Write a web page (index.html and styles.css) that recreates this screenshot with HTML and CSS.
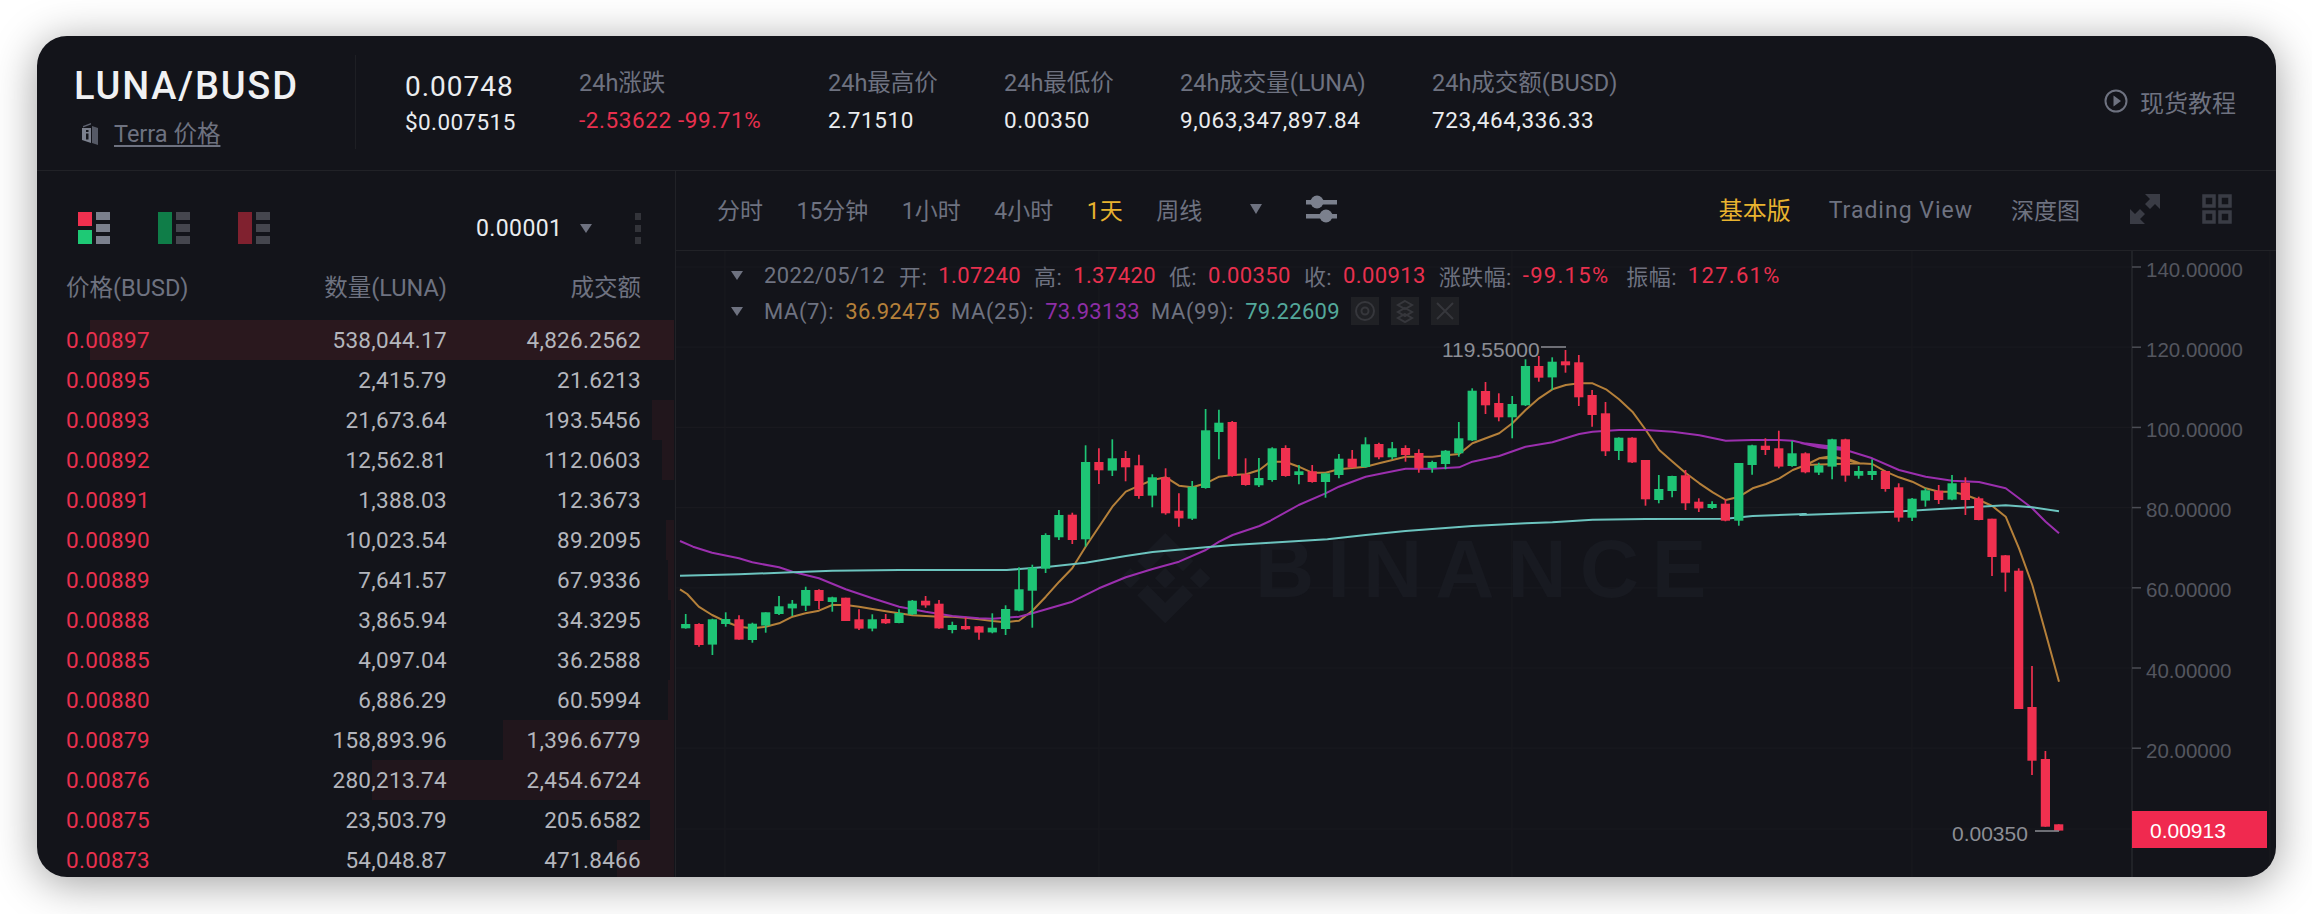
FILE: index.html
```html
<!DOCTYPE html>
<html lang="zh-CN">
<head>
<meta charset="utf-8">
<title>LUNA/BUSD</title>
<link rel="stylesheet" href="styles.css">
</head>
<body>
<main class="card">
  <header class="ticker">
    <div class="symbol">
      <div class="pair">LUNA/BUSD</div>
      <a class="coin">
        <svg class="book" viewBox="0 0 16 22"><path d="M1 3 9 0v1.500L1 4.500z" fill="#5f6370"/><path d="M0 5h9v15l-9-3z" fill="#7b808d"/><path d="M10 3l6 2v17l-6-2z" fill="#555965"/><rect x="4" y="7" width="2.500" height="2" fill="#14151a"/><rect x="4" y="10.500" width="2.500" height="6" fill="#14151a"/></svg>
        <span class="coin-name">Terra 价格</span>
      </a>
    </div>
    <div class="last">
      <div class="last-price">0.00748</div>
      <div class="last-usd">$0.007515</div>
    </div>
    <div class="stat"><div class="stat-k">24h涨跌</div><div class="stat-v red">-2.53622 -99.71%</div></div>
    <div class="stat"><div class="stat-k">24h最高价</div><div class="stat-v">2.71510</div></div>
    <div class="stat"><div class="stat-k">24h最低价</div><div class="stat-v">0.00350</div></div>
    <div class="stat"><div class="stat-k">24h成交量(LUNA)</div><div class="stat-v">9,063,347,897.84</div></div>
    <div class="stat"><div class="stat-k">24h成交额(BUSD)</div><div class="stat-v">723,464,336.33</div></div>
    <a class="tutorial">
      <svg class="play" viewBox="0 0 24 24"><circle cx="12" cy="12" r="10.500" fill="none" stroke="#6e7280" stroke-width="2"/><path d="M9.500 6.500 17 12l-7.500 5.500z" fill="#6e7280"/></svg>
      <span>现货教程</span>
    </a>
  </header>

  <div class="body">
    <section class="book-panel">
      <div class="book-tools">
        <svg class="layout" viewBox="0 0 32 32"><rect width="14" height="14" fill="#f0304f"/><rect y="18" width="14" height="14" fill="#1ec975"/><rect x="18" width="14" height="8" fill="#7b808d"/><rect x="18" y="12" width="14" height="8" fill="#7b808d"/><rect x="18" y="24" width="14" height="8" fill="#7b808d"/></svg>
        <svg class="layout" viewBox="0 0 32 32"><rect width="14" height="32" fill="#0f7d48"/><rect x="18" width="14" height="8" fill="#45464e"/><rect x="18" y="12" width="14" height="8" fill="#45464e"/><rect x="18" y="24" width="14" height="8" fill="#45464e"/></svg>
        <svg class="layout" viewBox="0 0 32 32"><rect width="14" height="32" fill="#80212f"/><rect x="18" width="14" height="8" fill="#45464e"/><rect x="18" y="12" width="14" height="8" fill="#45464e"/><rect x="18" y="24" width="14" height="8" fill="#45464e"/></svg>
        <span class="tick-size">0.00001</span>
        <i class="caret caret-big"></i>
        <span class="kebab"><i></i><i></i><i></i></span>
      </div>
      <div class="book-head"><span>价格(BUSD)</span><span>数量(LUNA)</span><span>成交额</span></div>
      <div class="rows">
        <div class="row"><i class="depth depth-strong" style="width:584px"></i><span class="red">0.00897</span><span>538,044.17</span><span>4,826.2562</span></div>
        <div class="row"><span class="red">0.00895</span><span>2,415.79</span><span>21.6213</span></div>
        <div class="row"><i class="depth" style="width:22px"></i><span class="red">0.00893</span><span>21,673.64</span><span>193.5456</span></div>
        <div class="row"><i class="depth" style="width:12px"></i><span class="red">0.00892</span><span>12,562.81</span><span>112.0603</span></div>
        <div class="row"><span class="red">0.00891</span><span>1,388.03</span><span>12.3673</span></div>
        <div class="row"><i class="depth" style="width:8px"></i><span class="red">0.00890</span><span>10,023.54</span><span>89.2095</span></div>
        <div class="row"><i class="depth" style="width:6px"></i><span class="red">0.00889</span><span>7,641.57</span><span>67.9336</span></div>
        <div class="row"><i class="depth" style="width:3px"></i><span class="red">0.00888</span><span>3,865.94</span><span>34.3295</span></div>
        <div class="row"><i class="depth" style="width:4px"></i><span class="red">0.00885</span><span>4,097.04</span><span>36.2588</span></div>
        <div class="row"><i class="depth" style="width:6px"></i><span class="red">0.00880</span><span>6,886.29</span><span>60.5994</span></div>
        <div class="row"><i class="depth" style="width:171px"></i><span class="red">0.00879</span><span>158,893.96</span><span>1,396.6779</span></div>
        <div class="row"><i class="depth" style="width:302px"></i><span class="red">0.00876</span><span>280,213.74</span><span>2,454.6724</span></div>
        <div class="row"><i class="depth" style="width:24px"></i><span class="red">0.00875</span><span>23,503.79</span><span>205.6582</span></div>
        <div class="row"><i class="depth" style="width:57px"></i><span class="red">0.00873</span><span>54,048.87</span><span>471.8466</span></div>
      </div>
    </section>

    <section class="chart-panel">
      <nav class="tools">
        <div class="tabs">
          <span>分时</span><span>15分钟</span><span>1小时</span><span>4小时</span><span class="on">1天</span><span>周线</span>
          <i class="caret more"></i>
          <svg class="sliders" viewBox="0 0 31 28"><rect y="5" width="31" height="4.500" fill="#7b808d"/><rect y="19" width="31" height="4.500" fill="#7b808d"/><circle cx="11" cy="7" r="6.500" fill="#7b808d"/><circle cx="20" cy="21" r="6.500" fill="#7b808d"/></svg>
        </div>
        <div class="views">
          <span class="on view-basic">基本版</span><span class="latin">Trading View</span><span>深度图</span>
          <svg class="expand" viewBox="0 0 30 30"><path d="M30 0v15l-5-5-5 5-5-5 5-5-5-5zM0 30V15l5 5 5-5 5 5-5 5 5 5z" fill="#3a3c45"/></svg>
          <svg class="panes" viewBox="0 0 30 30"><g fill="none" stroke="#3a3c45" stroke-width="3.500"><rect x="2" y="2" width="10" height="10"/><rect x="18" y="2" width="10" height="10"/><rect x="2" y="18" width="10" height="10"/><rect x="18" y="18" width="10" height="10"/></g></svg>
        </div>
      </nav>
      <div class="canvas">
        <svg id="chart" class="plot" viewBox="676 251 1600 626" xmlns="http://www.w3.org/2000/svg"></svg>
        <div class="legend">
          <div class="legend-line">
            <i class="caret small"></i>
            <span class="k date">2022/05/12</span>
            <span class="k">开:</span><span class="v red">1.07240</span>
            <span class="k">高:</span><span class="v red">1.37420</span>
            <span class="k">低:</span><span class="v red">0.00350</span>
            <span class="k">收:</span><span class="v red">0.00913</span>
            <span class="k">涨跌幅:</span><span class="v pct red">-99.15%</span>
            <span class="k">振幅:</span><span class="v pct red">127.61%</span>
          </div>
          <div class="legend-line">
            <i class="caret small"></i>
            <span class="k ma-k">MA(7):</span><span class="v ma7">36.92475</span>
            <span class="k ma-k">MA(25):</span><span class="v ma25">73.93133</span>
            <span class="k ma-k">MA(99):</span><span class="v ma99">79.22609</span>
            <span class="btns">
              <b class="btn"><svg viewBox="0 0 28 28"><circle cx="14" cy="14" r="9" fill="none" stroke="#36373c" stroke-width="2"/><circle cx="14" cy="14" r="3.500" fill="none" stroke="#36373c" stroke-width="2"/></svg></b>
              <b class="btn"><svg viewBox="0 0 28 28"><g fill="none" stroke="#36373c" stroke-width="2"><path d="M14 4l7 4-7 4-7-4z"/><path d="M14 11l7 4-7 4-7-4z"/><path d="M14 17l7 4-7 4-7-4z"/></g></svg></b>
              <b class="btn"><svg viewBox="0 0 28 28"><path d="M6 6l16 16M22 6 6 22" stroke="#36373c" stroke-width="2"/></svg></b>
            </span>
          </div>
        </div>
      </div>
    </section>
  </div>
</main>
<script src="chart.js"></script>
</body>
</html>
```
FILE: styles.css
```css
* { box-sizing: border-box; }
html, body { margin: 0; height: 100%; background: #fff; overflow: hidden; }
body {
  padding: 36px 36px 37px 37px;
  font-family: Roboto, "Noto Sans CJK SC", sans-serif;
  color: #eaecef;
}
.red { color: #e8304e; }
.card {
  height: 841px;
  display: flex;
  flex-direction: column;
  background: #13141a;
  border-radius: 30px;
  overflow: hidden;
  box-shadow: 0 6px 44px rgba(0, 0, 0, .38);
}

/* ticker */
.ticker {
  flex: none;
  height: 135px;
  display: grid;
  grid-template-columns: 319px 223px 249px 176px 176px 252px 1fr auto;
  border-bottom: 1px solid #212227;
}
.symbol {
  margin: 19px 0 21px;
  padding: 9px 0 0 37px;
  border-right: 1px solid #1e1f24;
}
.pair { font-size: 38px; font-weight: 500; line-height: 44px; letter-spacing: 1.800px; color: #f0f1f3; }
.coin { display: flex; align-items: center; gap: 16px; margin: 12px 0 0 8px; }
.book { width: 16px; height: 22px; }
.coin-name { font-size: 23.500px; line-height: 28px; color: #6e7280; text-decoration: underline; text-underline-offset: 3px; }
.last { padding: 34px 0 0 49px; }
.last-price { font-size: 28px; line-height: 34px; letter-spacing: 1px; }
.last-usd { font-size: 22.500px; line-height: 28px; margin-top: 4px; letter-spacing: .4px; }
.stat { padding-top: 32px; }
.stat-k { font-size: 23.500px; line-height: 30px; color: #6e7280; white-space: nowrap; }
.stat-v { font-size: 22.500px; line-height: 28px; margin-top: 8px; white-space: nowrap; letter-spacing: .6px; }
.tutorial { display: flex; align-items: center; gap: 12px; padding: 0 40px 4px 0; font-size: 24px; color: #6e7280; }
.play { width: 24px; height: 24px; }

/* layout */
.body { flex: 1; min-height: 0; display: flex; }
.book-panel { flex: none; width: 639px; border-right: 1px solid #212227; overflow: hidden; }
.book-tools { display: flex; align-items: center; height: 32px; margin: 41px 0 27px 41px; }
.layout { width: 32px; height: 32px; margin-right: 48px; }
.tick-size { margin-left: 158px; font-size: 23px; letter-spacing: .4px; }
.caret { display: block; width: 0; height: 0; border-style: solid; border-color: #6e7280 transparent transparent; }
.caret-big { margin-left: 18px; border-width: 9px 6px 0; }
.kebab { display: grid; gap: 5px; margin-left: 43px; }
.kebab i { display: block; width: 6px; height: 7px; background: #33343a; }
.book-head {
  display: grid;
  grid-template-columns: 151px 230px 194px;
  height: 34px;
  margin-bottom: 15px;
  padding-left: 29px;
  font-size: 23.500px;
  line-height: 34px;
  color: #6e7280;
}
.book-head span + span, .row span + span { text-align: right; }
.row {
  position: relative;
  display: grid;
  grid-template-columns: 151px 230px 194px;
  height: 40px;
  padding-left: 29px;
  font-size: 22.500px;
  line-height: 40px;
  letter-spacing: .3px;
  color: #b4b6bd;
}
.row span { position: relative; }
.depth { position: absolute; top: 0; right: 1px; bottom: 0; background: #21161c; }
.depth-strong { background: #2a181e; }

/* chart */
.chart-panel { flex: 1; min-width: 0; display: flex; flex-direction: column; }
.tools {
  flex: none;
  height: 80px;
  display: flex;
  align-items: center;
  justify-content: space-between;
  padding: 0 44px 4px 41px;
  border-bottom: 1px solid #212227;
  font-size: 23px;
  color: #6e7280;
}
.tabs, .views { display: flex; align-items: center; }
.tabs { gap: 33.500px; }
.views { gap: 38px; }
.on { color: #e8b32f; }
.view-basic { font-size: 24px; }
.latin { letter-spacing: 1px; position: relative; top: 2px; }
.more { margin-left: 14px; border-width: 10px 6px 0; }
.sliders { width: 31px; height: 28px; margin-left: 11px; }
.expand, .panes { width: 30px; height: 30px; }
.expand { margin-left: 12px; }
.panes { margin-left: 4px; }
.canvas { position: relative; flex: 1; min-height: 0; }
.plot { position: absolute; inset: 0; width: 100%; height: 100%; display: block; }
.legend { position: absolute; top: 6px; left: 55px; font-size: 22px; color: #6e7280; }
.legend-line { display: flex; align-items: center; height: 36px; white-space: nowrap; gap: 11px; }
.small { margin-right: 10px; border-width: 9px 6px 0; }
.date { margin-right: 3px; letter-spacing: .7px; }
.k { letter-spacing: .4px; }
.ma-k { letter-spacing: .6px; }
.v { margin-right: 2px; letter-spacing: .4px; }
.pct { letter-spacing: 1.300px; margin-right: 6px; }
.ma7, .ma25, .ma99 { margin-right: 0; letter-spacing: .3px; }
.ma7 { color: #b5803a; }
.ma25 { color: #8e2ea6; }
.ma99 { color: #53a89a; }
.btns { display: flex; gap: 12px; }
.btn { display: block; width: 28px; height: 28px; background: #202125; }
.btn svg { display: block; width: 28px; height: 28px; }

/* chart svg */
.grid { stroke: #19191f; stroke-width: 1.200; }
.axis { stroke: #26272c; stroke-width: 1.500; }
.axis-tick { stroke: #4b4d55; stroke-width: 1.500; }
.axis-label { font: 20.500px "Liberation Sans", sans-serif; fill: #54565f; dominant-baseline: central; }
.extreme { font: 21px "Liberation Sans", sans-serif; fill: #8c8e95; dominant-baseline: central; }
.extreme-line { stroke: #8c8e95; stroke-width: 1.500; }
.ma { fill: none; stroke-width: 2; stroke-linejoin: round; }
.ma-7 { stroke: #b5803a; }
.ma-25 { stroke: #9b2fae; }
.ma-99 { stroke: #6cc4bf; }
.g { fill: #1ec475; stroke: #1ec475; }
.r { fill: #f0304f; stroke: #f0304f; }
.wick { stroke-width: 1.700; }
.body-rect { stroke: none; }
.tag { fill: #f0294f; }
.tag-text { font: 21px "Liberation Sans", sans-serif; fill: #fff; dominant-baseline: central; }
.mark { font: bold 82px "Liberation Sans", sans-serif; fill: #181a21; letter-spacing: 13px; }
.mark-logo { fill: #181a21; }
```
FILE: chart.js
```js
// Candles: index offset by segment; values [color, wickTop, bodyTop, bodyBottom, wickBottom]
var segs = [
  { y: 340, start: 0, d: "g 822 852 865 866,r 850 852 915 920,g 836 838 914 945,g 817 837 852 860,r 826 838 899 899,g 848 851 900 908,g 817 817 857 878,g 768 799 822 825,g 780 791 805 828,g 740 750 797 813,r 748 750 783 808,g 770 772 786 815,r 773 773 843 843,r 808 838 866 870,g 823 838 866 874,r 822 837 850 852,g 808 819 849 850,g 780 782 823 825,r 768 782 796 803,r 780 791 865 866,g 845 855 870 880,r 832 858 868 870,r 858 859 878 899,g 820 863 877 880,g 796 807 867 885,g 682 748 812 814,g 674 683 752 863,g 580 585 686 699,g 510 525 592 600,r 518 524 600 612,g 316 366 598 620,r 325 366 391 432,g 298 355 392 408,r 333 354 382 424,r 344 376 468 476,g 403 412 467 502,r 385 412 520 524,r 460 512 535 560,g 423 440 536 540,g 207 271 444 446,g 209 248 276 358,r 243 246 408 410,r 355 403 435 437,g 354 414 436 441" },
  { y: 330, start: 44, d: "g 352 355 450 455,r 346 354 438 440,g 405 424 435 463,r 405 424 456 458,g 428 430 456 503,g 372 386 435 445,r 360 386 412 414,g 322 343 411 413,r 338 342 382 388,g 336 355 382 388,r 346 354 375 395,r 358 369 415 428,g 392 396 414 428,g 360 362 402 418,g 276 325 370 380,g 175 182 331 333,r 156 183 226 252,r 190 219 262 274,g 198 222 262 325,g 88 108 226 228,r 78 108 143 155,g 82 95 142 180,r 60 94 106 128,r 75 97 202 228,r 180 195 255 290,r 216 250 364 378,g 322 323 363 390,r 322 323 397 399,r 390 390 508 527,g 435 477 510 520,g 437 438 483 502,r 420 436 520 540,r 505 515 535 546,g 514 522 534 537,r 508 521 572 574,g 399 399 572 587,g 344 346 405 434,r 325 347 360 375,r 302 355 410 415,g 333 370 408 410" },
  { y: 420, start: 84, d: "r 97 100 157 160,g 128 136 158 165,g 56 58 140 178,r 56 58 167 185,g 138 153 167 176,g 118 153 165 180,r 152 153 207 215,r 190 202 293 305,g 234 236 293 303,g 205 211 242 260,r 195 212 240 252,g 165 190 239 241,r 172 188 240 285,r 230 235 300 301,r 296 296 411 468,r 405 406 458 515,r 445 452 867 867,r 738 861 1022 1065,r 993 1017 1220 1220,r 1213 1213 1232 1232" }
];
var lineSegs = [
  { x: 670, sx: 2.613, y: 340, o: "26 748 45 762 75 800 110 825 146 845 180 860 215 865 250 860 285 850 320 830 354 820 389 812 424 795 459 795 494 800 529 807 564 814 599 820 633 826 668 828 703 830 738 830 772 833 807 838 843 843 877 847 912 842 947 812 982 770 1017 725 1051 685 1086 620 1121 560 1156 500 1191 455 1226 437 1261 420 1296 412 1330 437 1365 442 1400 430 1435 410 1470 405 1505 403 1540 390",
    p: "26 603 60 620 110 638 180 655 215 667 285 682 320 695 389 715 459 748 529 775 599 800 668 815 738 828 807 835 843 836 912 830 947 820 1051 785 1121 745 1191 712 1261 687 1330 665 1400 630 1435 605 1470 585 1540 558",
    t: "26 707 180 703 320 697 424 692 600 690 880 690 990 680 1086 668 1191 648 1261 636 1400 622 1470 615 1568 608" },
  { x: 1270, sx: 2.613, y: 330, o: "0 395 40 395 75 410 110 428 145 428 180 418 215 414 250 410 285 400 320 390 354 380 389 380 424 380 459 376 494 372 529 340 564 325 599 310 633 280 668 240 703 205 738 178 773 165 808 160 843 160 878 178 912 208 947 245 982 300 1017 360 1052 395 1087 430 1122 460 1157 487 1191 510 1226 500 1261 475 1296 462 1331 445 1366 420 1400 405 1435 385 1470 385 1505 385 1540 400",
    p: "0 573 75 525 145 490 180 470 250 440 285 432 354 416 424 416 494 412 529 395 599 378 668 350 738 337 808 312 843 305 912 300 982 300 1052 305 1122 316 1191 332 1261 330 1331 330 1366 332 1435 350 1505 355",
    t: "150 628 250 615 354 603 529 588 668 580 738 577 843 569 982 567 1191 566 1261 558 1400 552" },
  { x: 1800, sx: 3, y: 420, o: "17 135 57 115 97 108 137 120 177 130 217 132 257 155 297 172 337 185 377 205 417 215 457 215 497 225 537 240 577 258 617 290 657 385 697 495 737 640 777 785",
    p: "0 68 57 82 97 87 137 90 217 115 297 150 377 170 457 182 537 186 617 205 657 235 697 265 737 305 777 340",
    t: "0 285 280 275 457 265 617 256 697 262 777 274" }
];
var svg = document.getElementById("chart");
var out = [];
function line(x1, y1, x2, y2, c) {
  out.push('<line class="' + c + '" x1="' + x1 + '" y1="' + y1 + '" x2="' + x2 + '" y2="' + y2 + '"/>');
}
var ticks = [140, 120, 100, 80, 60, 40, 20];
ticks.forEach(function (v, i) {
  var y = 267 + i * 80.2;
  line(676, y, 2132, y, "grid");
});
line(676, 829, 2132, 829, "grid");
[725, 1099, 1512, 1912].forEach(function (x) { line(x, 251, x, 877, "grid"); });

// watermark
out.push('<g class="mark-logo" transform="translate(1120 533) scale(.72)"><polygon points="38.2 53.2 62.8 28.6 87.4 53.2 101.7 38.9 62.8 0 23.9 38.9"/><polygon points="0 62.8 14.3 48.5 28.6 62.8 14.3 77.1"/><polygon points="48.4 62.8 62.8 48.4 77.1 62.8 62.8 77.1"/><polygon points="97 62.8 111.300 48.500 125.600 62.800 111.300 77.100"/><polygon points="87.4 72.300 62.800 96.900 38.200 72.300 23.900 86.600 62.800 125.500 101.700 86.600"/></g>');
out.push('<text class="mark" x="1255" y="597">BINANCE</text>');

// moving averages
var pts = { o: [], p: [], t: [] };
lineSegs.forEach(function (s) {
  ["o", "p", "t"].forEach(function (k) {
    var n = s[k].split(" ").map(Number);
    for (var i = 0; i < n.length; i += 2) {
      pts[k].push((s.x + n[i] / s.sx).toFixed(1) + "," + (s.y + n[i + 1] / 3).toFixed(1));
    }
  });
});
out.push('<polyline class="ma ma-7" points="' + pts.o.join(" ") + '"/>');
out.push('<polyline class="ma ma-25" points="' + pts.p.join(" ") + '"/>');
out.push('<polyline class="ma ma-99" points="' + pts.t.join(" ") + '"/>');

// candles
segs.forEach(function (s) {
  s.d.split(",").forEach(function (c, i) {
    var f = c.split(" ");
    var x = 685.7 + 13.33 * (s.start + i);
    var v = f.slice(1).map(function (n) { return s.y + Number(n) / 3; });
    out.push('<g class="' + f[0] + '"><line class="wick" x1="' + x.toFixed(1) + '" x2="' + x.toFixed(1) + '" y1="' + v[0].toFixed(1) + '" y2="' + v[3].toFixed(1) + '"/><rect class="body-rect" x="' + (x - 4.6).toFixed(1) + '" y="' + v[1].toFixed(1) + '" width="9.200" height="' + (v[2] - v[1]).toFixed(1) + '"/></g>');
  });
});

// high / low marks
out.push('<text class="extreme" x="1442" y="349">119.55000</text>');
line(1541, 347, 1566, 347, "extreme-line");
out.push('<text class="extreme" x="1952" y="833">0.00350</text>');
line(2035, 831, 2059, 831, "extreme-line");

// axis
line(2132, 251, 2132, 877, "axis");
line(2270, 251, 2270, 877, "grid");
ticks.forEach(function (v, i) {
  var y = 267 + i * 80.2;
  line(2132, y, 2141, y, "axis-tick");
  out.push('<text class="axis-label" x="2146" y="' + (y + 2) + '">' + v + '.00000</text>');
});
out.push('<rect class="tag" x="2132" y="811" width="135" height="37"/>');
out.push('<text class="tag-text" x="2150" y="830">0.00913</text>');
svg.innerHTML = out.join("");
```
